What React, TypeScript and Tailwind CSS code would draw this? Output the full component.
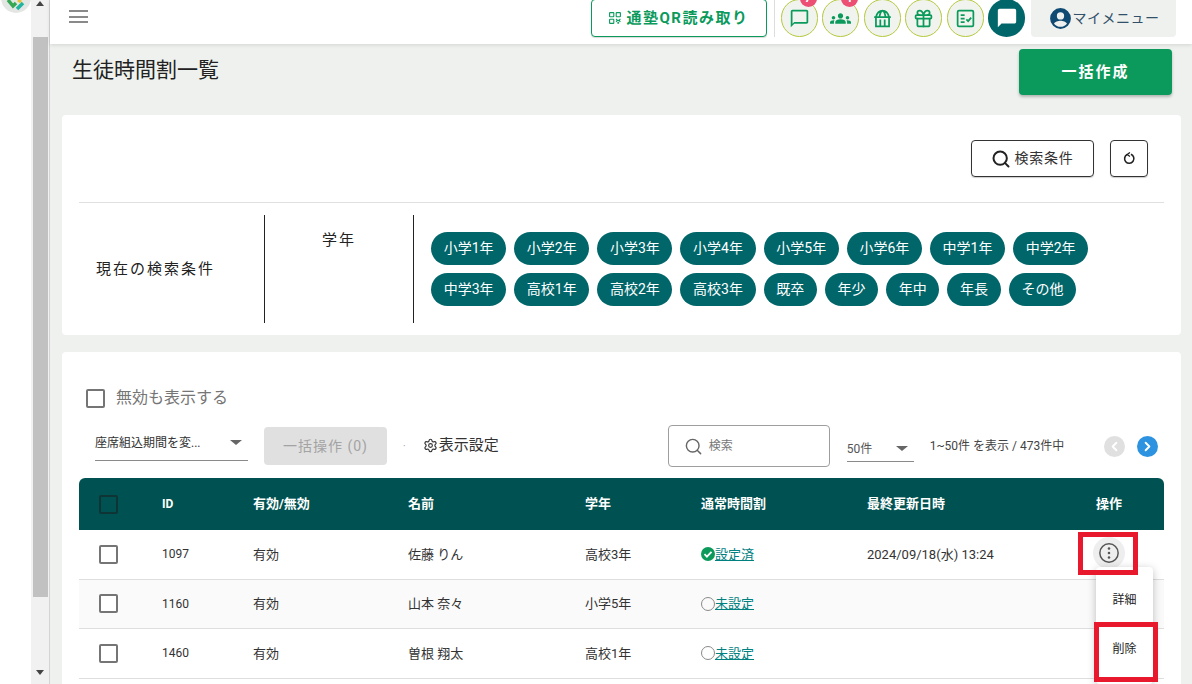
import { ChevronLeft, ChevronRight, Gift, Settings, Search } from 'lucide-react'

const font = '[font-family:Roboto,"Noto_Sans_CJK_JP",sans-serif]'
const tableCols = 'grid-cols-[83px_91px_155px_177px_116px_166px_229px_68px]'

const gradeRows = [
  ['小学1年', '小学2年', '小学3年', '小学4年', '小学5年', '小学6年', '中学1年', '中学2年'],
  ['中学3年', '高校1年', '高校2年', '高校3年', '既卒', '年少', '年中', '年長', 'その他'],
]

const rows = [
  { id: '1097', name: '佐藤 りん', grade: '高校3年', done: true, date: '2024/09/18(水) 13:24' },
  { id: '1160', name: '山本 奈々', grade: '小学5年', done: false, date: '' },
  { id: '1460', name: '曽根 翔太', grade: '高校1年', done: false, date: '' },
]

function HeaderIcon({ children, badge }: { children: React.ReactNode; badge?: string }) {
  return (
    <div className="relative flex h-[38px] w-[37px] items-center justify-center rounded-full border border-[#b5c83c] bg-[#f1f4ee] text-[#0b9a5c]">
      {children}
      {badge ? (
        <span className="absolute -top-[11px] right-0 flex h-[18px] w-[17px] items-center justify-center rounded-full bg-[#ec4e74] text-[12px] font-bold text-white">
          {badge}
        </span>
      ) : null}
    </div>
  )
}

function Checkbox({ dark }: { dark?: boolean }) {
  return (
    <div
      className={`h-[19px] w-[19px] rounded-[2px] border-2 ${dark ? 'border-[#0e3436]' : 'border-[#757575] bg-white'}`}
    />
  )
}

export default function App() {
  return (
    <div className={`flex h-[684px] w-[1192px] overflow-hidden bg-white text-[#222] ${font}`}>
      <div className="relative w-[31px] shrink-0 bg-white">
        <svg viewBox="0 0 31 14" className="absolute left-0 top-0 h-[14px] w-[31px]">
          <circle cx="16" cy="-2" r="15" fill="#e4e6e4" />
          <path d="M8 0l5 6 3-3" fill="none" stroke="#35a853" strokeWidth="3.5" />
          <path d="M17 9l6-6" fill="none" stroke="#1fb5a0" strokeWidth="3.5" />
          <path d="M18 0l3 2" fill="none" stroke="#e8c22e" strokeWidth="3" />
        </svg>
      </div>

      <div className="flex w-[19px] shrink-0 flex-col items-center border-r border-[#d4d4d4] bg-[#f1f1f1]">
        <div className="mt-[1px] h-0 w-0 border-x-[4px] border-b-[5px] border-x-transparent border-b-[#444]" />
        <div className="mt-[31px] h-[560px] w-[15px] bg-[#c1c1c1]" />
        <div className="mt-[73px] h-0 w-0 border-x-[4px] border-t-[5px] border-x-transparent border-t-[#444]" />
      </div>

      <div className="relative flex min-w-0 flex-1 flex-col bg-[#eef1ed]">
        <header className="z-10 flex h-[44px] shrink-0 items-start justify-between bg-white pl-[19px] pr-[16px] shadow-[0_1px_4px_rgba(0,0,0,0.12)]">
          <div className="mt-[10px] flex w-[19px] flex-col gap-[3.5px]">
            <div className="h-[2px] bg-[#8a8a8a]" />
            <div className="h-[2px] bg-[#8a8a8a]" />
            <div className="h-[2px] bg-[#8a8a8a]" />
          </div>
          <div className="-mt-px flex items-start">
            <div className="flex h-[38px] w-[176px] items-center justify-center gap-[6px] rounded-[4px] border border-[#0b9a5c] bg-white text-[15px] font-bold tracking-[1.5px] text-[#0b9a5c] shadow-[0_1px_1px_rgba(0,0,0,0.15)]">
              <svg viewBox="0 0 12 12" className="h-[12px] w-[12px]" fill="none" stroke="currentColor" strokeWidth="1.1">
                <rect x="0.6" y="0.6" width="4.2" height="4.2" rx="0.5" />
                <rect x="7.2" y="0.6" width="4.2" height="4.2" rx="0.5" />
                <rect x="0.6" y="7.2" width="4.2" height="4.2" rx="0.5" />
                <path d="M7 7l1.4 1.4L7 9.8M11.4 7L10 8.4l1.4 1.4M8.4 8.4H10M8.4 11.4L9.2 10.4 10 11.4" />
              </svg>
              通塾QR読み取り
            </div>
            <div className="ml-[7px] mr-[6px] h-[38px] w-px bg-[#dddddd]" />
            <div className="flex gap-[4.5px]">
              <HeaderIcon badge="7">
                <svg viewBox="0 0 24 24" className="h-[21px] w-[21px]" fill="currentColor">
                  <path d="M20 2H4c-1.1 0-2 .9-2 2v18l4-4h14c1.1 0 2-.9 2-2V4c0-1.1-.9-2-2-2zm0 14H6l-2 2V4h16v12z" />
                </svg>
              </HeaderIcon>
              <HeaderIcon badge="1">
                <svg viewBox="0 0 24 24" className="h-[21px] w-[21px]" fill="currentColor">
                  <path d="M12 12.75c1.63 0 3.07.39 4.24.9 1.08.48 1.76 1.56 1.76 2.73V18H6v-1.61c0-1.18.68-2.26 1.76-2.73 1.17-.52 2.61-.91 4.24-.91zM4 13c1.1 0 2-.9 2-2s-.9-2-2-2-2 .9-2 2 .9 2 2 2zm1.13 1.1c-.37-.06-.74-.1-1.13-.1-.99 0-1.93.21-2.78.58C.48 14.9 0 15.62 0 16.43V18h4.5v-1.61c0-.83.23-1.61.63-2.29zM20 13c1.1 0 2-.9 2-2s-.9-2-2-2-2 .9-2 2 .9 2 2 2zm4 3.43c0-.81-.48-1.53-1.22-1.85-.85-.37-1.79-.58-2.78-.58-.39 0-.76.04-1.13.1.4.68.63 1.46.63 2.29V18H24v-1.57zM12 6c1.66 0 3 1.34 3 3s-1.34 3-3 3-3-1.34-3-3 1.34-3 3-3z" />
                </svg>
              </HeaderIcon>
              <HeaderIcon>
                <svg viewBox="0 0 24 24" className="h-[21px] w-[21px]" fill="none" stroke="currentColor" strokeWidth="2">
                  <path d="M4.500 10.500C5.500 6.500 8 3 12 3s6.500 3.500 7.500 7.500M8.500 10.500C9 7 10 3.500 12 3c2 .5 3 4 3.500 7.500" />
                  <path d="M2.500 10.500h19M4.500 10.500V21h15V10.500M9.500 13v8M14.500 13v8" />
                </svg>
              </HeaderIcon>
              <HeaderIcon>
                <Gift size={21} strokeWidth={2} />
              </HeaderIcon>
              <HeaderIcon>
                <svg viewBox="0 0 24 24" className="h-[21px] w-[21px]" fill="none" stroke="currentColor" strokeWidth="2">
                  <rect x="3" y="3" width="18" height="18" rx="1.500" />
                  <path d="M6.500 8H11M6.500 12H11M6.500 16H11M13 13l2 2 3.500-4" />
                </svg>
              </HeaderIcon>
              <div className="flex h-[38px] w-[37px] items-center justify-center rounded-full bg-[#00666a]">
                <svg viewBox="0 0 24 24" className="h-[22px] w-[22px]" fill="white">
                  <path d="M20 2H4c-1.1 0-2 .9-2 2v18l4-4h14c1.1 0 2-.9 2-2V4c0-1.1-.9-2-2-2z" />
                </svg>
              </div>
            </div>
            <div className="ml-[6px] flex h-[38px] w-[145px] items-center justify-center rounded-b-[4px] bg-[#eff1ee] text-[14px] tracking-[0.5px] text-[#31506a]">
              <svg viewBox="0 0 24 24" className="h-[25px] w-[25px]" fill="#0f4a73">
                <path d="M12 2a10 10 0 1 0 0 20 10 10 0 0 0 0-20zm0 4a3.500 3.500 0 1 1 0 7 3.500 3.500 0 0 1 0-7zm0 14a8 8 0 0 1-6.200-3c.6-1.800 4-2.800 6.200-2.800s5.600 1 6.200 2.800A8 8 0 0 1 12 20z" />
              </svg>
              マイメニュー
            </div>
          </div>
        </header>

        <div className="flex h-[71px] shrink-0 items-start justify-between pl-[22px] pr-[20px] pt-[5px]">
          <h1 className="mt-[9px] text-[21px] leading-[24px] text-[#222]">生徒時間割一覧</h1>
          <div className="flex h-[46px] w-[153px] items-center justify-center rounded-[4px] bg-[#0b9a5c] text-[15px] font-bold tracking-[2px] text-white shadow-[0_2px_3px_rgba(0,0,0,0.25)]">
            一括作成
          </div>
        </div>

        <section className="ml-[12px] mr-[11px] h-[220px] shrink-0 rounded-[4px] bg-white px-[17px] pt-[25px]">
          <div className="flex justify-end gap-[16px] pr-[16px]">
            <div className="flex h-[37px] w-[123px] items-center justify-center gap-[3px] rounded-[4px] border border-[#333] text-[14px] tracking-[0.8px] text-[#333] shadow-[0_1px_1px_rgba(0,0,0,0.2)]">
              <Search size={20} strokeWidth={2.4} className="text-[#222]" />
              検索条件
            </div>
            <div className="flex h-[37px] w-[38px] items-center justify-center rounded-[4px] border border-[#333] shadow-[0_1px_1px_rgba(0,0,0,0.2)]">
              <svg viewBox="0 0 14 14" className="h-[13px] w-[13px]" fill="none" stroke="#222" strokeWidth="1.700">
                <path d="M8.500 2.500A5 5 0 1 1 4.500 2.700" />
                <path d="M7.500 0.500L4.500 2.700 7.500 4.800" strokeWidth="1.400" />
              </svg>
            </div>
          </div>
          <div className="mt-[25px] flex h-[121px] border-t border-[#e0e0e0] pt-[12px]">
            <div className="flex w-[186px] shrink-0 items-center border-r border-[#222] pl-[17px] text-[15px] tracking-[2px]">
              現在の検索条件
            </div>
            <div className="w-[149px] shrink-0 border-r border-[#222] pt-[14px] text-center text-[15px] tracking-[2px]">
              学年
            </div>
            <div className="flex flex-col gap-[8px] pl-[17px] pt-[17px]">
              {gradeRows.map((row, i) => (
                <div key={i} className="flex gap-[8px]">
                  {row.map((g) => (
                    <span
                      key={g}
                      className="flex h-[33px] items-center justify-center rounded-full bg-[#00666a] px-[12.65px] text-[14px] text-white"
                    >
                      {g}
                    </span>
                  ))}
                </div>
              ))}
            </div>
          </div>
        </section>

        <section className="ml-[12px] mr-[11px] mt-[17px] flex-1 rounded-t-[4px] bg-white px-[17px] pt-[34px]">
          <div className="flex items-center gap-[11px] pl-[7px] text-[16px] text-[#757575]">
            <Checkbox />
            無効も表示する
          </div>
          <div className="mt-[15px] flex h-[42px] items-center">
            <div className="ml-[16px] mt-[1px] flex h-[29px] w-[153px] items-center justify-between border-b border-[#8a8a8a] pb-[6px] pr-[6px] text-[12px] text-[#333]">
              座席組込期間を変...
              <span className="mb-[2px] h-0 w-0 border-x-[6px] border-t-[5px] border-x-transparent border-t-[#666]" />
            </div>
            <div className="ml-[16px] flex h-[38px] w-[123px] items-center justify-center rounded-[4px] bg-[#e0e0e0] text-[14px] tracking-[1px] text-[#a3a3a3]">
              一括操作 (0)
            </div>
            <span className="ml-[16px] text-[10px] text-[#999]">·</span>
            <div className="mb-[2px] ml-[17px] flex items-center gap-[1px] text-[15px] text-[#333]">
              <Settings size={15} strokeWidth={1.8} />
              表示設定
            </div>
            <div className="ml-[169px] flex h-[42px] w-[162px] items-center gap-[6px] rounded-[4px] border border-[#9e9e9e] pl-[15px] text-[12px] text-[#777]">
              <Search size={19} strokeWidth={1.8} className="text-[#666]" />
              検索
            </div>
            <div className="ml-[17px] mt-[6px] flex h-[26px] w-[67px] items-center justify-between border-b border-[#8a8a8a] pr-[6px] text-[12px] text-[#555]">
              50件
              <span className="h-0 w-0 border-x-[6px] border-t-[5px] border-x-transparent border-t-[#666]" />
            </div>
            <span className="ml-[16px] text-[12px] text-[#444]">1~50件 を表示 / 473件中</span>
            <div className="ml-[40px] flex h-[21px] w-[21px] items-center justify-center rounded-full bg-[#e0e0e0] text-white">
              <ChevronLeft size={15} strokeWidth={3} />
            </div>
            <div className="ml-[12px] flex h-[21px] w-[21px] items-center justify-center rounded-full bg-[#2d93e0] text-white">
              <ChevronRight size={15} strokeWidth={3} />
            </div>
          </div>

          <div
            className={`mt-[11px] grid h-[52px] items-center rounded-t-[6px] bg-[#005252] text-[13px] font-bold text-white ${tableCols}`}
          >
            <div className="pl-[20px]">
              <Checkbox dark />
            </div>
            <div className="text-[12px]">ID</div>
            <div>有効/無効</div>
            <div>名前</div>
            <div>学年</div>
            <div>通常時間割</div>
            <div>最終更新日時</div>
            <div>操作</div>
          </div>

          {rows.map((r, i) => (
            <div
              key={r.id}
              className={`grid h-[49.5px] items-center border-b border-[#dedede] text-[13px] text-[#333] ${tableCols} ${i === 1 ? 'bg-[#fafafa]' : 'bg-white'}`}
            >
              <div className="pl-[20px]">
                <Checkbox />
              </div>
              <div className="text-[12px]">{r.id}</div>
              <div>有効</div>
              <div>{r.name}</div>
              <div>{r.grade}</div>
              <div className="flex items-center">
                {r.done ? (
                  <svg viewBox="0 0 14 14" className="h-[14px] w-[14px]">
                    <circle cx="7" cy="7" r="7" fill="#0b9a5c" />
                    <path d="M3.500 7.200l2.400 2.400 4.600-4.800" fill="none" stroke="white" strokeWidth="1.800" />
                  </svg>
                ) : (
                  <span className="h-[14px] w-[14px] rounded-full border border-[#8a8a8a]" />
                )}
                <span className="text-[#00807f] underline">{r.done ? '設定済' : '未設定'}</span>
              </div>
              <div>{r.date}</div>
              <div />
            </div>
          ))}
        </section>

        {/* row menu, sits over the table */}
        <div className="absolute left-[1043px] top-[537px] flex h-[32px] w-[32px] items-center justify-center rounded-full bg-[#eeeeee] text-[#555]">
          <svg viewBox="0 0 24 24" className="h-[22px] w-[22px]" fill="none" stroke="currentColor" strokeWidth="1.600">
            <circle cx="12" cy="12" r="10" />
            <circle cx="12" cy="7" r="1.400" fill="currentColor" stroke="none" />
            <circle cx="12" cy="12" r="1.400" fill="currentColor" stroke="none" />
            <circle cx="12" cy="17" r="1.400" fill="currentColor" stroke="none" />
          </svg>
        </div>
        <div className="absolute left-[1046px] top-[567px] flex h-[117px] w-[57px] flex-col items-center rounded-[4px] bg-white text-[12px] text-[#222] shadow-[0_2px_8px_rgba(0,0,0,0.25)]">
          <span className="mt-[24px]">詳細</span>
          <span className="mt-[31px]">削除</span>
        </div>
        <div className="absolute left-[1028px] top-[532px] h-[43px] w-[60px] border-[5px] border-[#e8192c]" />
        <div className="absolute left-[1044px] top-[622px] h-[60px] w-[64px] border-[5px] border-[#e8192c]" />
      </div>
    </div>
  )
}
